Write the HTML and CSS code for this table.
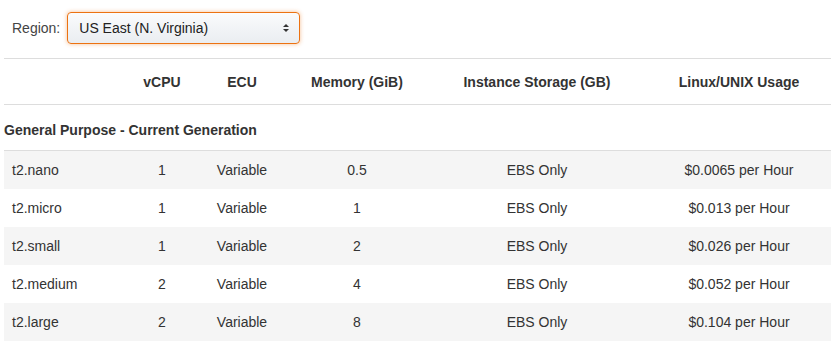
FILE: index.html
```html
<!DOCTYPE html>
<html lang="en">
<head>
    <meta charset="UTF-8">
    <meta name="viewport" content="width=device-width, initial-scale=1.0">
    <title>Instance Pricing</title>
    <link rel="stylesheet" href="styles.css">
</head>
<body>
    <div class="container">
        <div class="region-bar">
            <label class="region-label">Region:</label>
            <div class="region-select">
                <span>US East (N. Virginia)</span>
                <svg class="caret" width="8" height="10" viewBox="0 0 8 10">
                    <path d="M4 1 L7 4 L1 4 Z" fill="#333"/>
                    <path d="M4 9 L7 6 L1 6 Z" fill="#333"/>
                </svg>
            </div>
        </div>

        <table class="price-table">
            <colgroup>
                <col class="c-name">
                <col class="c-vcpu">
                <col class="c-ecu">
                <col class="c-mem">
                <col class="c-store">
                <col class="c-price">
            </colgroup>
            <thead>
                <tr>
                    <th></th>
                    <th>vCPU</th>
                    <th>ECU</th>
                    <th>Memory (GiB)</th>
                    <th>Instance Storage (GB)</th>
                    <th>Linux/UNIX Usage</th>
                </tr>
            </thead>
            <tbody>
                <tr class="section-row">
                    <th colspan="6">General Purpose - Current Generation</th>
                </tr>
                <tr>
                    <td>t2.nano</td>
                    <td>1</td>
                    <td>Variable</td>
                    <td>0.5</td>
                    <td>EBS Only</td>
                    <td>$0.0065 per Hour</td>
                </tr>
                <tr>
                    <td>t2.micro</td>
                    <td>1</td>
                    <td>Variable</td>
                    <td>1</td>
                    <td>EBS Only</td>
                    <td>$0.013 per Hour</td>
                </tr>
                <tr>
                    <td>t2.small</td>
                    <td>1</td>
                    <td>Variable</td>
                    <td>2</td>
                    <td>EBS Only</td>
                    <td>$0.026 per Hour</td>
                </tr>
                <tr>
                    <td>t2.medium</td>
                    <td>2</td>
                    <td>Variable</td>
                    <td>4</td>
                    <td>EBS Only</td>
                    <td>$0.052 per Hour</td>
                </tr>
                <tr>
                    <td>t2.large</td>
                    <td>2</td>
                    <td>Variable</td>
                    <td>8</td>
                    <td>EBS Only</td>
                    <td>$0.104 per Hour</td>
                </tr>
            </tbody>
        </table>
    </div>
</body>
</html>
```

FILE: styles.css
```css
body {
    font-family: "Liberation Sans", Arial, sans-serif;
    font-size: 14px;
    margin: 0;
    color: #333;
    background: #fff;
}

.container {
    padding: 0 8px 0 4px;
}

.region-bar {
    display: flex;
    align-items: center;
    gap: 7px;
    padding: 12px 0 0 8px;
    height: 31px;
    margin-bottom: 15px;
}

.region-label {
    color: #444;
}

.region-select {
    display: flex;
    align-items: center;
    justify-content: space-between;
    box-sizing: border-box;
    width: 233px;
    height: 32px;
    padding: 0 9px 0 11px;
    border: 1px solid #ec7211;
    border-radius: 4px;
    background: linear-gradient(#fafbfc, #eaedf1);
    box-shadow: 0 0 4px rgba(236, 114, 17, 0.45);
    color: #222;
}

.caret {
    display: block;
}

.price-table {
    width: 827px;
    border-collapse: collapse;
    table-layout: fixed;
}

.c-name { width: 123px; }
.c-vcpu { width: 70px; }
.c-ecu { width: 90px; }
.c-mem { width: 140px; }
.c-store { width: 220px; }
.c-price { width: 184px; }

.price-table thead th {
    height: 45px;
    font-weight: bold;
    text-align: center;
    border-top: 1px solid #ddd;
    border-bottom: 1px solid #ddd;
    padding: 0 4px;
}

.section-row th {
    height: 40px;
    text-align: left;
    font-weight: bold;
    padding: 5px 0 0 0;
    border-bottom: 1px solid #ddd;
}

.price-table td {
    height: 38px;
    padding: 0 4px;
    text-align: center;
}

.price-table td:first-child {
    text-align: left;
    padding-left: 8px;
}

.price-table tbody tr:nth-child(even) td {
    background: #f5f5f5;
}
```
